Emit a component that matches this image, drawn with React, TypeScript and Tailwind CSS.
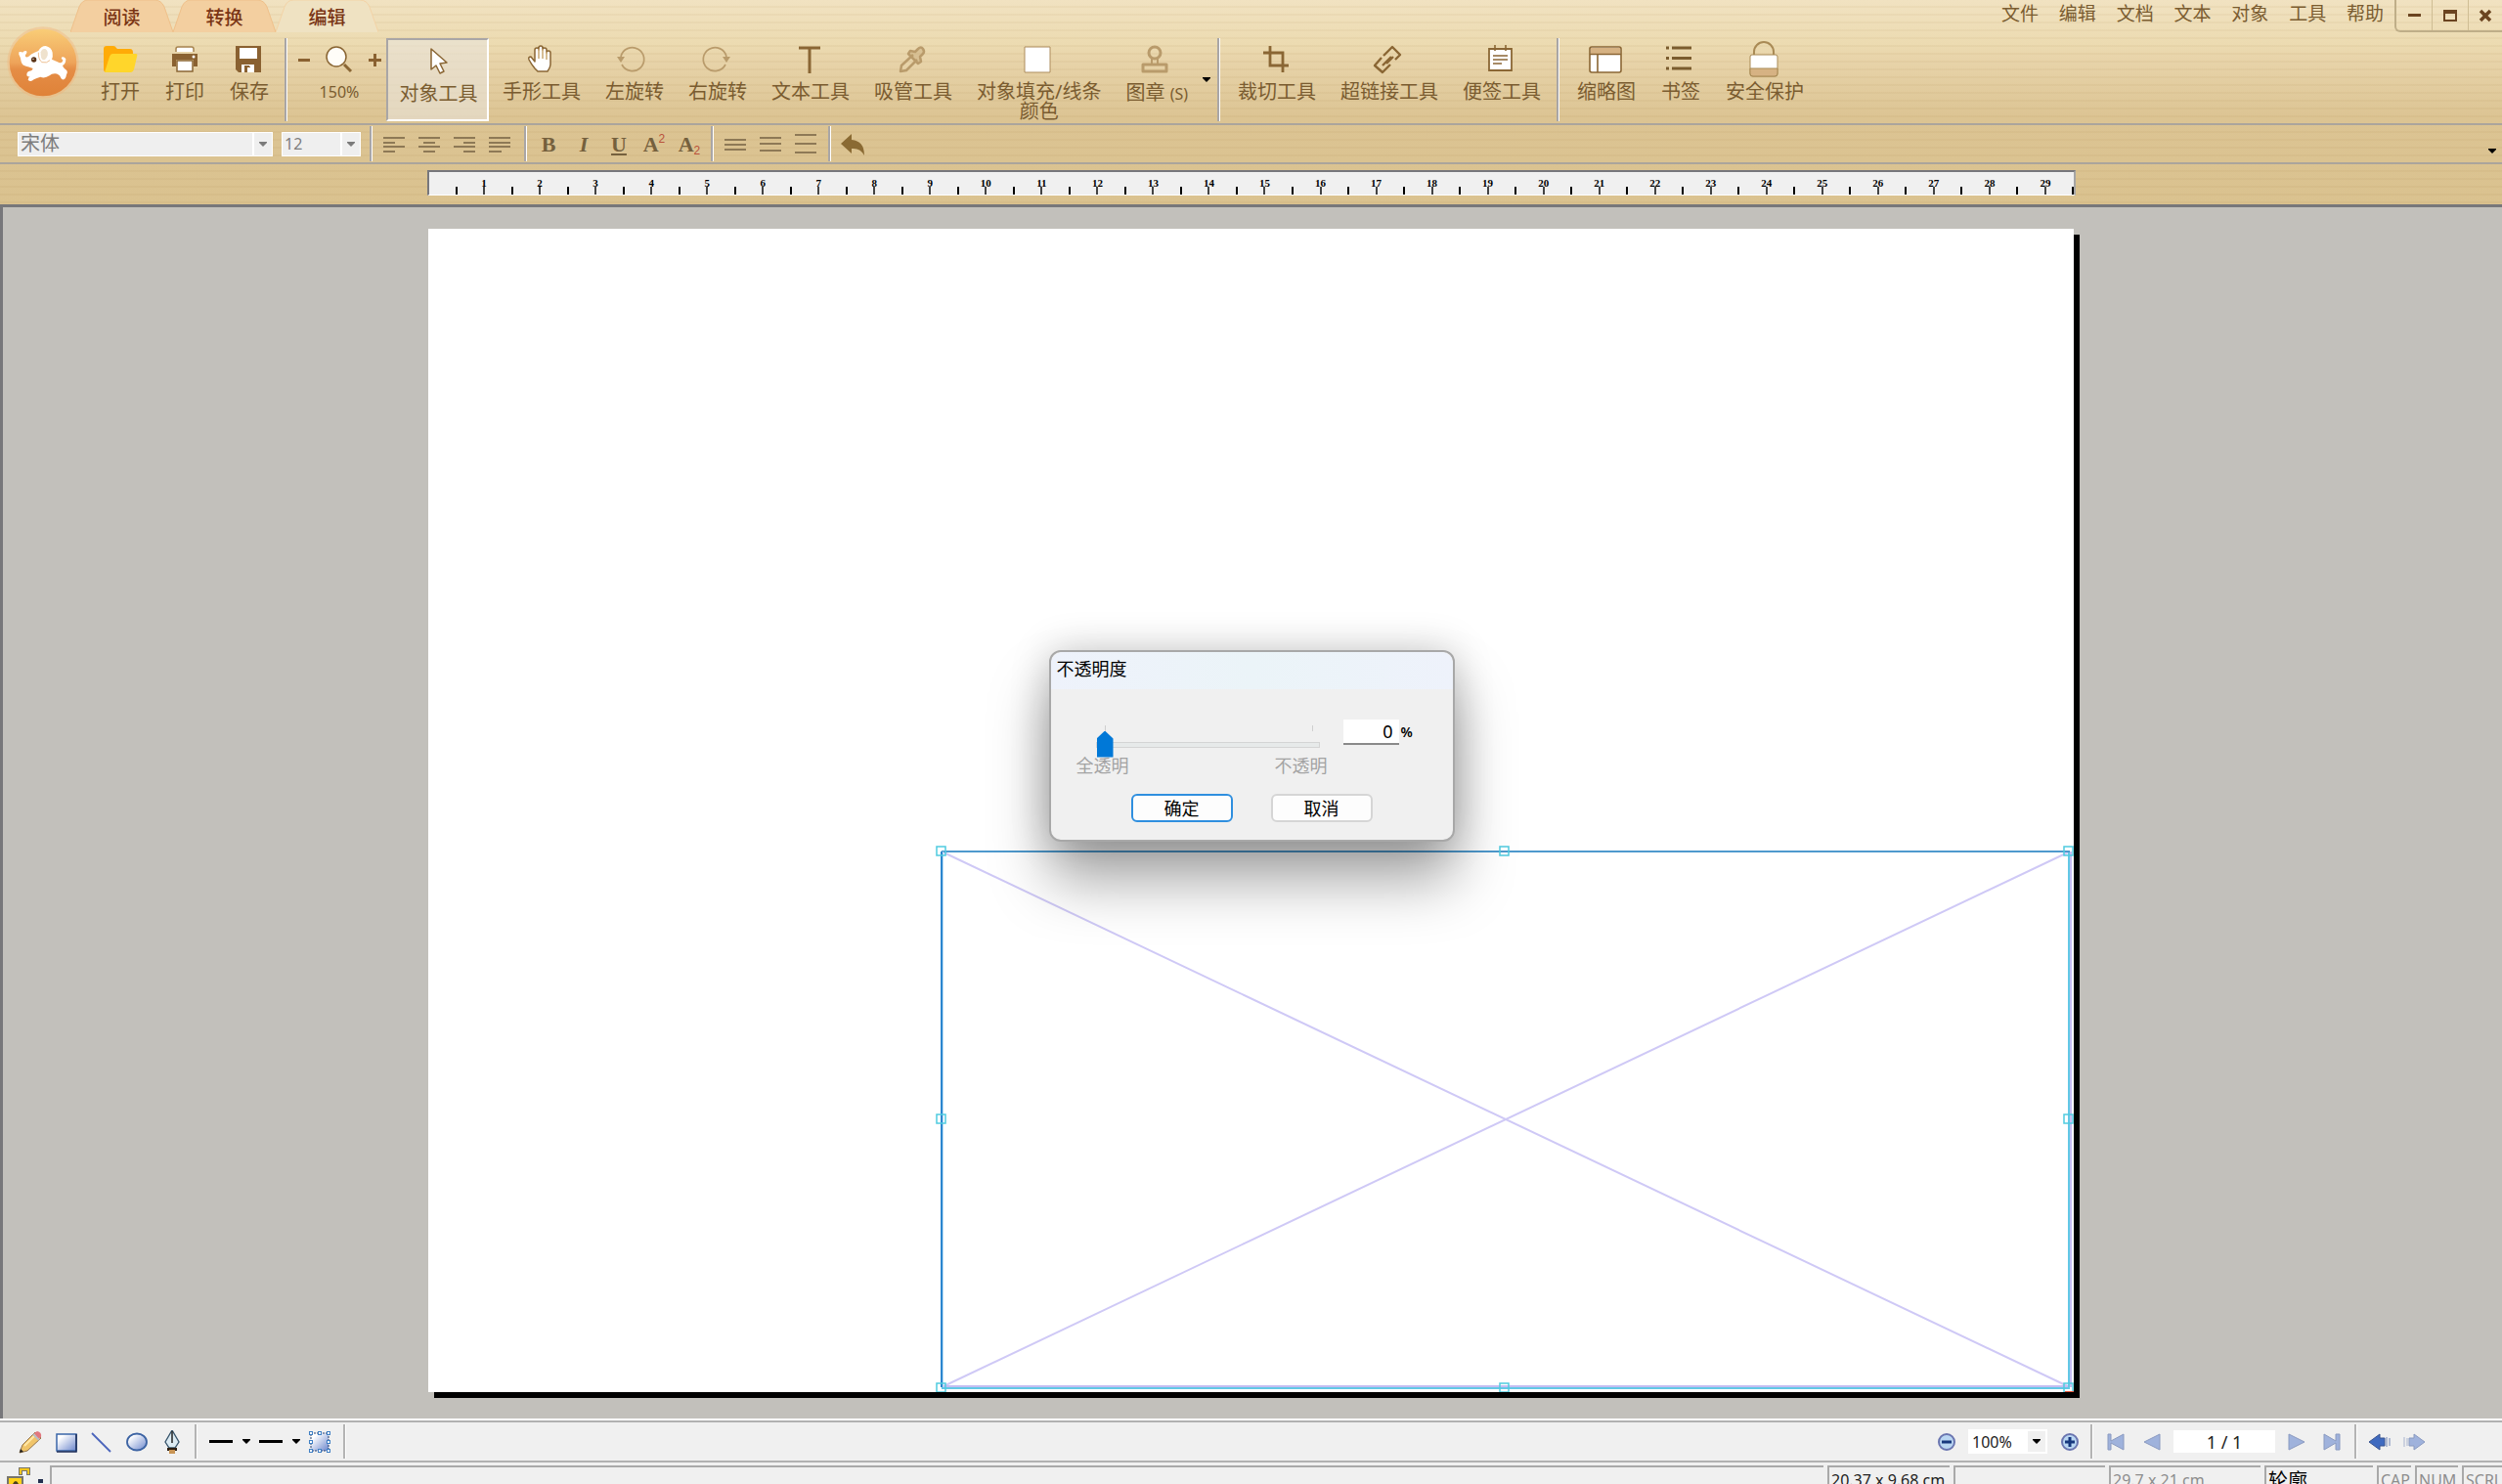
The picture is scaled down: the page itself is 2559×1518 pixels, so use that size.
import { useState } from "react";
import type { ReactNode } from "react";

const BROWN = "#8a6634";
const FADED = "#b99b6b";

function Sep({ light }: { light?: boolean }) {
  return <div className={`shrink-0 self-stretch w-[3px] border-l-2 border-r border-r-white ${light ? "border-l-[#b4b4b4]" : "border-l-[#a9a6a6]"}`} />;
}

function Arrow({ color = "#000" }: { color?: string }) {
  return (
    <svg width="8" height="5" viewBox="0 0 8 5" className="shrink-0"><path d="M0 0h8v1L4 5 0 1z" fill={color} /></svg>
  );
}

function Icon({ children, size = 32 }: { children: ReactNode; size?: number }) {
  return <svg width={size} height={size} viewBox={`0 0 ${size} ${size}`} fill="none" className="shrink-0">{children}</svg>;
}

const ICONS: Record<string, ReactNode> = {
  open: (
    <>
      <path d="M-1 5q0-3 3-3h7q2 0 3 2l1 1h13q3 0 3 4v3L25 29H2q-3 0-3-3z" fill="#ffab07" />
      <path d="M5 13q1-3 3-3h24q2 0 1 3l-3 13q-1 3-3 3H0z" fill="#ffd62b" />
    </>
  ),
  print: (
    <>
      <path d="M7 8V5q0-2 2-2h14q2 0 2 2v3" fill="#fff" stroke="#a68350" strokeWidth="1.5" />
      <path d="M3 10h26v13h-4v-7H7v7H3z" fill="#8a6131" />
      <path d="M8 17h16v11H8z" fill="#fff" stroke={BROWN} strokeWidth="1.5" />
      <circle cx="25" cy="13" r="1.5" fill="#fff" />
    </>
  ),
  save: (
    <>
      <path d="M2 2h26v27H5l-3-3z" fill="#8a6131" />
      <path d="M6 4h18v11H6zM8 21h13v8h-4v-6h-4v6H8z" fill="#fff" />
      <path d="M11 22h5v7h-5z" fill="#8a6131" /><path d="M14 24h3v5h-3z" fill="#fff" />
    </>
  ),
  zoom: (
    <>
      <path d="m21 21 7 7" stroke={BROWN} strokeWidth="3" />
      <circle cx="13" cy="13" r="10" fill="#fffdf8" stroke={BROWN} strokeWidth="1.5" />
    </>
  ),
  pointer: <path d="M8 3v21l5-4 4 8 4-2-4-8 7-1z" fill="#fff" stroke={BROWN} strokeWidth="1.5" strokeLinejoin="round" />,
  hand: (
    <>
      <path d="M9 25q-4-5-6-9-1-3 2-3l4 5V6q0-2 2-2t2 2V4q0-2 2-2t2 2v2q0-2 2-2t2 2v3q0-2 2-2t2 2v12q0 3-3 7H12z" fill="#fff" stroke={BROWN} strokeWidth="1.5" strokeLinejoin="round" />
      <path d="M13 5v10M17 5v10M21 8v8" stroke="#c9a873" strokeWidth="1.5" />
    </>
  ),
  left: (
    <>
      <path d="M2 13a12 12 0 1 1 1 8" stroke={FADED} strokeWidth="1.7" />
      <path d="M-2 13h8l-4 6z" fill={FADED} />
    </>
  ),
  right: (
    <>
      <path d="M25 13a12 12 0 1 0-1 8" stroke={FADED} strokeWidth="1.7" />
      <path d="M29 13h-8l4 6z" fill={FADED} />
    </>
  ),
  text: <path d="M4 4h22M15 4v26" stroke={BROWN} strokeWidth="3" />,
  dropper: (
    <>
      <path d="M16 11 4 22l-1 6 6-1 11-11" stroke={FADED} strokeWidth="2.5" strokeLinejoin="round" />
      <path d="m13 7 5 1 3-3q3-3 5 0t0 5l-3 3 1 5-3 2-10-10z" fill={FADED} fillOpacity="0.35" stroke={FADED} strokeWidth="2.5" strokeLinejoin="round" />
    </>
  ),
  fill: <path d="M1 3h26v26H1z" fill="#fff" stroke="#ad8c5d" />,
  stamp: (
    <>
      <circle cx="14" cy="9" r="6" stroke={FADED} strokeWidth="3" />
      <path d="M11 15v6m6-6v6" stroke={FADED} strokeWidth="2" />
      <path d="M2 21h24v7H2z" stroke={FADED} strokeWidth="3" strokeLinejoin="round" />
    </>
  ),
  crop: <path d="M9 2v20h19M2 9h20v20" stroke={BROWN} strokeWidth="2.8" />,
  link: <path d="m10 12 9-9 8 8-5 5M8 14l-7 8 8 7 8-8M9 22l9-9M13 20l7-7" stroke={BROWN} strokeWidth="2.4" strokeLinejoin="round" />,
  note: (
    <>
      <path d="M3 5h23v22H3z" fill="#fff" stroke={BROWN} strokeWidth="1.8" />
      <path d="M9 1v6M20 1v6M7 12h15M7 16h15M7 20h9" stroke={BROWN} strokeWidth="1.6" />
    </>
  ),
  thumbs: (
    <>
      <rect x="-1" y="3" width="32" height="26" rx="2" fill="#fff" stroke={BROWN} strokeWidth="1.6" />
      <path d="M0 4h30v6H0z" fill="#d6b283" /><path d="M-1 10.5h32M7 10v19" stroke={BROWN} strokeWidth="1.6" />
    </>
  ),
  list: <path d="M1 4h3M1 14.5h3M1 25h3M7 4h20M7 14.5h20M7 25h20" stroke="#7b5c2e" strokeWidth="3" />,
  lock: (
    <>
      <path d="M5 12V8a10 10 0 0 1 20 0v4" stroke="#a98a55" strokeWidth="2" />
      <rect x="1" y="11" width="28" height="22" rx="2" fill="#fff" stroke="#a98a55" />
      <path d="M1 25h28v5q0 3-3 3H4q-3 0-3-3z" fill="#d6b283" stroke="#a98a55" />
    </>
  ),
};

function Tool({ icon, label, active, disabled }: { icon: string; label: string; active?: boolean; disabled?: boolean }) {
  return (
    <button disabled={disabled} className={active
      ? "flex flex-col items-center w-[105px] pt-[6px] pl-[2px] border-t-2 border-l-2 border-r-2 border-b-2 border-t-[#a9a6a6] border-l-[#a9a6a6] border-r-white border-b-white bg-[#eae5dc]/60"
      : "flex flex-col items-center pt-[6px] whitespace-pre"}>
      <span className="h-8 w-8 [&>svg]:overflow-visible"><Icon>{ICONS[icon]}</Icon></span>
      <span className="mt-[7px] text-xl leading-5">{label}</span>
    </button>
  );
}

function Logo() {
  return (
    <svg width="80" height="80" viewBox="11 9 240 240" className="shrink-0">
      <defs>
        <linearGradient id="logo" x1="0" y1="0" x2="0" y2="1">
          <stop offset="0" stopColor="#f9cd77" /><stop offset="0.5" stopColor="#eea45a" />
          <stop offset="0.6" stopColor="#e58d46" /><stop offset="1" stopColor="#df8238" />
        </linearGradient>
      </defs>
      <circle cx="131" cy="129" r="110" fill="#f2b578" opacity="0.4" />
      <circle cx="131" cy="129" r="103" fill="url(#logo)" />
      <path d="M57 97q8-2 11 1 4-6 11-5 5 2 1 8-5 4-3 10 5 3 10-1 7-8 18-12l12-5q8-15 22-15 18 4 21 20 2 12-2 21 13 5 22 10 11 3 12-8-8-5-2-9 6-2 11 6 0 15-10 20 2 8 9 12 9 6 3 16-1 10-6 14-9 4-12-5-4-11-18-12-10 0-16 6-15 10-28 4-12 3-20 8-10 9-18 1 1-8 6-10-11 2-10-6 0-10 14-12 3-2 5-7-14-6-21-7-12-2-15-14-2-15-7-22z" fill="#fff" />
      <path d="M124 97q4-12 14-10 10 7 7 20-5 14-14 14-8-4-7-24z" fill="#efe2cd" />
      <path d="M117 98q-1 22 11 30 15 4 24-6" fill="none" stroke="#e9b27c" strokeWidth="2.5" />
      <circle cx="103" cy="120" r="8" fill="#5a3418" /><circle cx="101" cy="118" r="2" fill="#fff" />
    </svg>
  );
}

function Tab({ label, active }: { label: string; active?: boolean }) {
  return (
    <button className="relative h-[33px] w-[105px] text-[#7a3515]">
      <svg width="105" height="33" viewBox="0 0 105 33" className="absolute inset-0" fill="none">
        <path d="M0 33 9 7Q12 0 18 0h68q7 0 10 7l9 26z" fill={active ? "#efe2c2" : "#f3cfa0"} />
        <path d="M0 33 9 7Q12 0 18 0h68q7 0 10 7l9 26" stroke={active ? "#f3d3a6" : "#efc08a"} />
      </svg>
      <span className="relative text-[19px] leading-9 font-medium">{label}</span>
    </button>
  );
}

function Lines({ rows }: { rows: [number, number, number][] }) {
  return <Icon size={22}>{rows.map(([x, y, w]) => <path key={y} d={`M${x} ${y}h${w}`} stroke="#7b6748" strokeWidth="1.6" />)}</Icon>;
}

const ALIGN: [string, [number, number, number][]][] = [
  ["左对齐", [[0, 4, 22], [0, 9, 12], [0, 13, 22], [0, 18, 12]]],
  ["居中", [[0, 4, 22], [5, 9, 12], [0, 13, 22], [5, 18, 12]]],
  ["右对齐", [[0, 4, 22], [10, 9, 12], [0, 13, 22], [10, 18, 12]]],
  ["两端对齐", [[0, 4, 22], [0, 9, 22], [0, 13, 22], [0, 18, 13]]],
];
const SPACING: [string, [number, number, number][]][] = [
  ["单倍行距", [[0, 6, 22], [0, 11, 22], [0, 16, 22]]],
  ["1.5 倍行距", [[0, 4, 22], [0, 10, 22], [0, 17, 22]]],
  ["双倍行距", [[0, 1, 22], [0, 10, 22], [0, 19, 22]]],
];

function FakeSelect({ label, value, className }: { label: string; value: string; className: string }) {
  return (
    <div className={`flex h-[25px] border border-white bg-[#efefef] ${className}`}>
      <select aria-label={label} disabled className="min-w-0 flex-1 appearance-none px-[2px] leading-[22px] text-[#7d7d7d] opacity-100"><option>{value}</option></select>
      <span className="flex w-5 items-center justify-center border-l-2 border-white"><Arrow color="#7b7b7b" /></span>
    </div>
  );
}

function Ruler() {
  return (
    <div className="mx-auto flex h-[26px] w-[1686px] border-t-2 border-l-2 border-r-2 border-b border-t-[#77777c] border-l-[#77777c] border-r-[#a5a5a5] border-b-white bg-[#f0f0f0]">
      {[...Array(59)].map((_, i) => (
        <div key={i} className="relative flex flex-1 items-end justify-end">
          {i % 2 === 1 && (
            <span className="absolute -right-2 top-[5px] w-[18px] text-center font-['Liberation_Serif',serif] text-[11px] leading-3 font-bold text-black">{(i + 1) / 2}</span>
          )}
          <span className={`h-2 w-[2px] ${i % 2 ? "bg-[#444]" : "bg-black"}`} />
        </div>
      ))}
    </div>
  );
}

function Selection() {
  return (
    <svg viewBox="0 0 1683 1190" className="h-full w-full" fill="none">
      <path d="M525 637 1679 1185M525 1185 1679 637" stroke="#cfc9f6" strokeWidth="2" />
      <path d="M525 1184h1154M1680 637v548" stroke="#c3bdf2" strokeWidth="2" />
      <path d="M525 1186h1154M1678 637v548" stroke="#62c8e6" strokeWidth="2" />
      <path d="M525 637h1154" stroke="#4e99cd" strokeWidth="2" />
      <path d="M526.5 637v548" stroke="#b9dcf4" /><path d="M525 637v548" stroke="#2b86cf" strokeWidth="2" />
      {[[525, 637], [1101, 637], [1678, 637], [525, 911], [1678, 911], [525, 1186], [1101, 1186], [1678, 1186]].map(([x, y]) => (
        <rect key={`${x}-${y}`} x={x - 5} y={y - 5} width="9" height="9" stroke="#4fcbe0" strokeWidth="1.5" />
      ))}
      <path d="M1674 1190h9" stroke="#e0563c" strokeWidth="2" />
    </svg>
  );
}

function OpacityDialog() {
  const [value, setValue] = useState(0);
  return (
    <div className="pointer-events-none absolute inset-0 flex items-center justify-center pt-2 pl-px">
      <div role="dialog" aria-label="不透明度" className="pointer-events-auto w-[415px] rounded-xl border-2 border-[#a8a8a8] bg-[#f0f0f0] text-lg leading-6 text-black shadow-[0_40px_60px_rgba(0,0,0,0.35),0_0_40px_rgba(0,0,0,0.2)]">
        <div className="h-[38px] rounded-t-xl bg-linear-to-r from-[#eef2fb] via-[#ebf4f8] to-[#eef2fb] px-[6px] pt-[5px]">不透明度</div>
        <div className="flex gap-4 pt-[37px] pl-[26px]">
          <div className="w-[257px]">
            <div className="mr-[15px] ml-[29px] flex h-[6px] justify-between border-x border-[#cfcfcf]" />
            <input type="range" aria-label="不透明度" min={0} max={100} value={value} onChange={e => setValue(+e.target.value)}
              className="mx-[20px] block h-[27px] w-[229px] appearance-none bg-transparent [&::-webkit-slider-runnable-track]:h-[6px] [&::-webkit-slider-runnable-track]:border [&::-webkit-slider-runnable-track]:border-[#d4d4d4] [&::-webkit-slider-runnable-track]:bg-[#e7eaea] [&::-webkit-slider-thumb]:-mt-[12px] [&::-webkit-slider-thumb]:h-[27px] [&::-webkit-slider-thumb]:w-[17px] [&::-webkit-slider-thumb]:appearance-none [&::-webkit-slider-thumb]:bg-[#0078d7] [&::-webkit-slider-thumb]:[clip-path:polygon(50%_0,100%_30%,100%_100%,0_100%,0_30%)]" />
            <div className="-mt-[4px] flex justify-between text-[#a3a3a3]"><span>全透明</span><span>不透明</span></div>
          </div>
          <label className="flex items-center gap-[2px] self-start -mt-[6px]">
            <input value={value} onChange={e => setValue(Number(e.target.value) || 0)} className="h-[26px] w-[57px] border-b-2 border-[#8a8a8a] bg-white pr-[6px] text-right text-lg" />
            <span className="text-sm font-semibold">%</span>
          </label>
        </div>
        <div className="flex gap-[39px] pt-[17px] pb-[18px] pl-[82px]">
          <button className="h-[29px] w-[104px] rounded-md border-2 border-[#2f8fdf] bg-[#fdfdfd]">确定</button>
          <button className="h-[29px] w-[104px] rounded-md border-2 border-[#d5d5d5] bg-[#fdfdfd]">取消</button>
        </div>
      </div>
    </div>
  );
}

function ZoomGlyph({ plus }: { plus?: boolean }) {
  return (
    <Icon size={20}>
      <circle cx="10" cy="10" r="8" fill="#b9d6f2" stroke="#6a75b0" strokeWidth="2" />
      <path d={plus ? "M5 10h10M10 5v10" : "M5 10h10"} stroke="#17387e" strokeWidth="3" />
    </Icon>
  );
}

function DrawBar() {
  return (
    <div className="flex items-center py-[2px]">
      <svg width="0" height="0" className="absolute">
        <defs><linearGradient id="shape" x1="0" y1="0" x2="1" y2="1"><stop offset="0.2" stopColor="#fff" /><stop offset="1" stopColor="#6b86cc" /></linearGradient></defs>
      </svg>
      <div className="flex gap-3 pl-[19px] pr-3">
        <button aria-label="铅笔"><Icon size={24}>
          <path d="M1 23l3-8L17 2l6 6L9 21z" fill="#f0c469" stroke="#93734a" /><path d="M16 3l3-2q5 1 4 6l-3 2z" fill="#e2777f" />
          <path d="M1 23l1-4 3 3z" fill="#222" /><path d="M6 16 17 5" stroke="#ffe7a6" strokeWidth="2" /><path d="m15 4 6 6" stroke="#b8bcc6" strokeWidth="2" />
        </Icon></button>
        <button aria-label="矩形"><Icon size={24}><path d="M3 4h20v17H3z" fill="url(#shape)" stroke="#3a66a8" strokeWidth="1.5" /><path d="M23 4v18H3" stroke="#1d2c58" strokeWidth="1.5" /></Icon></button>
        <button aria-label="直线"><Icon size={24}><path d="m3 3 19 19" stroke="#4a64bb" strokeWidth="1.8" /></Icon></button>
        <button aria-label="椭圆"><Icon size={24}><ellipse cx="13" cy="12" rx="10" ry="8.5" fill="url(#shape)" stroke="#3c63a3" strokeWidth="1.8" /></Icon></button>
        <button aria-label="钢笔"><Icon size={24}>
          <path d="m13 0-7 12 4 6h6l4-6z" fill="#dcebf3" stroke="#37546b" strokeWidth="1.3" /><path d="M13 1v12" stroke="#222" strokeWidth="1.5" />
          <path d="M8 18h10v3H8z" fill="#2d1f12" /><path d="M10 20h6v4h-6z" fill="#c99555" />
        </Icon></button>
      </div>
      <Sep light />
      <div className="flex h-[35px] items-center gap-[9px] pr-[13px] pl-[12px]">
        <button aria-label="线型" className="flex items-center gap-[10px]"><span className="h-[3px] w-[24px] bg-black" /><Arrow /></button>
        <button aria-label="线宽" className="flex items-center gap-[10px]"><span className="h-[3px] w-[24px] bg-black" /><Arrow /></button>
        <button aria-label="变换"><Icon size={22}>
          <path d="M2 2h18v18H2z" fill="url(#shape)" stroke="#27416f" strokeDasharray="2 1" />
          {[[0, 0], [9, 0], [18, 0], [0, 9], [18, 9], [0, 18], [9, 18], [18, 18]].map(([x, y]) => <rect key={`${x}-${y}`} x={x + 0.5} y={y + 0.5} width="3" height="3" fill="#fff" stroke="#3f7fc4" />)}
        </Icon></button>
      </div>
      <Sep light />
      <div className="ml-auto flex h-[35px] items-center pr-[79px]">
        <button aria-label="缩小"><ZoomGlyph /></button>
        <div className="mr-[13px] ml-3 flex h-[25px] w-[81px] bg-white p-[2px]">
          <select aria-label="缩放" className="min-w-0 flex-1 appearance-none pl-[2px] text-base leading-5 text-[#222]"><option>100%</option></select>
          <span className="flex w-[18px] items-center justify-center bg-[#f0f0f0]"><Arrow /></span>
        </div>
        <button aria-label="放大"><ZoomGlyph plus /></button>
        <div className="mr-[14px] ml-[11px] flex self-stretch"><Sep light /></div>
        <div className="flex items-center">
          <button aria-label="首页"><Icon size={20}><path d="M1 2h3v7l13-7v16L4 11v7H1z" fill="#9fb2dc" stroke="#8a9ac0" /></Icon></button>
          <button aria-label="上一页" className="ml-4"><Icon size={20}><path d="M18 2v16L2 10z" fill="#9fb2dc" stroke="#8a9ac0" /></Icon></button>
          <input aria-label="页码" defaultValue="1 / 1" className="mx-3 h-[23px] w-[104px] bg-white text-center text-lg leading-5 text-[#222]" />
          <button aria-label="下一页"><Icon size={20}><path d="M2 2v16l16-8z" fill="#9fb2dc" stroke="#8a9ac0" /></Icon></button>
          <button aria-label="末页" className="ml-4"><Icon size={20}><path d="M2 2v16l12-7v7h4V2h-4v7z" fill="#9fb2dc" stroke="#8a9ac0" /></Icon></button>
        </div>
        <div className="mr-3 ml-[13px] flex self-stretch"><Sep light /></div>
        <button aria-label="后退"><Icon size={22}><path d="M0 11 11 3v4h5v8h-5v4z" fill="#3f6ac0" stroke="#3a5590" /><path d="M18 6v10M21 7v8" stroke="#6f83b4" /></Icon></button>
        <button aria-label="前进" className="ml-[13px]"><Icon size={22}><path d="M22 11 11 3v4H6v8h5v4z" fill="#9fb2dc" stroke="#8a9ac0" /><path d="M1 6v10M4 7v8" stroke="#a9b4cf" /></Icon></button>
      </div>
    </div>
  );
}

const PANES = [
  { text: "20.37 x 9.68 cm", box: "w-[125px] text-[#222]" },
  { text: "", box: "w-[155px]" },
  { text: "29.7 x 21 cm", box: "w-[155px] text-[#8d8d8d]" },
  { text: "轮廓", box: "w-[111px] text-black text-xl" },
  { text: "CAP", box: "w-[35px] text-[#8d8d8d]" },
  { text: "NUM", box: "w-[44px] text-[#8d8d8d]" },
  { text: "SCRL", box: "w-[41px] text-[#8d8d8d]" },
];

export default function App() {
  return (
    <div className="relative flex h-screen flex-col overflow-hidden bg-[#f0f0f0] font-['Noto_Sans','Noto_Sans_CJK_SC',sans-serif] text-[#7a5c30]">
      <header className="bg-[repeating-linear-gradient(to_bottom,transparent_0_6px,rgba(150,110,50,0.06)_6px_8px),linear-gradient(to_bottom,#f1e2c1_0,#ecdbb1_45px,#e8d4aa_60px,#dcc493_120px,#dac28f_209px)]">
        <div className="flex h-[33px] justify-between">
          <div className="flex pl-[72px]"><Tab label="阅读" /><Tab label="转换" /><Tab label="编辑" active /></div>
          <div className="flex">
            <nav className="mr-[11px] flex w-[391px] justify-between text-[19px] leading-7">
              {["文件", "编辑", "文档", "文本", "对象", "工具", "帮助"].map(m => <button key={m} className="self-start">{m}</button>)}
            </nav>
            <div className="flex w-[110px] divide-x divide-[#cfbd93] rounded-bl-md border-b-2 border-l-2 border-[#bfae88]">
              <button aria-label="最小化" className="flex w-[37px] items-center justify-center"><span className="h-[3px] w-[13px] bg-[#6b4420]" /></button>
              <button aria-label="最大化" className="flex w-[37px] items-center justify-center"><span className="h-3 w-[14px] border-2 border-t-4 border-[#6b4420]" /></button>
              <button aria-label="关闭" className="flex flex-1 items-center justify-center"><Icon size={14}><path d="m2 2 10 10M12 2 2 12" stroke="#6b4420" strokeWidth="3.5" /></Icon></button>
            </div>
          </div>
        </div>

        <div className="flex h-[95px] border-b-2 border-[#aba59c] pt-[6px] pb-[2px]">
          <button aria-label="主菜单" className="-mt-[15px] ml-1 self-start"><Logo /></button>
          <div className="flex gap-[26px] pr-4 pl-[19px]">
            <Tool icon="open" label="打开" /><Tool icon="print" label="打印" /><Tool icon="save" label="保存" />
          </div>
          <Sep />
          <div className="flex pl-[11px]">
            <button aria-label="缩小" className="mt-[21px] h-[3px] w-[12px] bg-[#8a6131]" />
            <div className="flex w-[60px] flex-col items-center pt-[6px]">
              <Icon>{ICONS.zoom}</Icon>
              <span className="mt-[7px] text-base leading-5">150%</span>
            </div>
            <button aria-label="放大" className="mt-4 mr-[5px] self-start"><Icon size={13}><path d="M0 6.5h13M6.5 0v13" stroke="#8a6131" strokeWidth="3" /></Icon></button>
          </div>
          <Tool icon="pointer" label="对象工具" active />
          <div className="flex gap-[25px] pr-[7px] pl-[14px]">
            <Tool icon="hand" label="手形工具" /><Tool icon="left" label="左旋转" disabled /><Tool icon="right" label="右旋转" disabled />
            <Tool icon="text" label="文本工具" /><Tool icon="dropper" label="吸管工具" disabled />
            <Tool icon="fill" label={"对象填充/线条\n颜色"} />
            <div className="flex">
              <button className="flex flex-col items-center pt-[6px]">
                <Icon>{ICONS.stamp}</Icon>
                <span className="mt-[7px] text-xl leading-5">图章 <span className="text-base">(S)</span></span>
              </button>
              <button aria-label="更多" className="ml-[15px] flex items-center"><Arrow /></button>
            </div>
          </div>
          <Sep />
          <div className="flex gap-[25px] pr-4 pl-[18px]">
            <Tool icon="crop" label="裁切工具" /><Tool icon="link" label="超链接工具" /><Tool icon="note" label="便签工具" />
          </div>
          <Sep />
          <div className="flex gap-[26px] pl-[18px]">
            <Tool icon="thumbs" label="缩略图" /><Tool icon="list" label="书签" /><Tool icon="lock" label="安全保护" />
          </div>
        </div>

        <div className="flex h-[40px] items-center border-b-2 border-[#aba59c] py-[1px] pl-[18px] text-[#75603d]">
          <FakeSelect label="字体" value="宋体" className="w-[261px] text-xl" />
          <FakeSelect label="字号" value="12" className="mr-[9px] ml-[9px] w-[81px] text-base" />
          <Sep />
          <div className="flex gap-[14px] pt-[2px] pr-[14px] pl-[11px]">
            {ALIGN.map(([n, rows]) => <button key={n} aria-label={n}><Lines rows={rows} /></button>)}
          </div>
          <Sep />
          <div className="flex pt-[2px] pr-1 pl-1 font-['Liberation_Serif',serif] text-[22px] leading-6 font-bold">
            <button className="w-9">B</button>
            <button className="w-9 italic">I</button>
            <button className="w-9 underline underline-offset-2">U</button>
            <button className="flex w-9 justify-center">A<span className="font-['Liberation_Sans',sans-serif] text-xs leading-3 font-normal text-[#b9513a]">2</span></button>
            <button className="flex w-9 items-end justify-center">A<span className="font-['Liberation_Sans',sans-serif] text-xs leading-3 font-normal text-[#b9513a]">2</span></button>
          </div>
          <Sep />
          <div className="flex gap-[14px] pt-[2px] pr-3 pl-[11px]">
            {SPACING.map(([n, rows]) => <button key={n} aria-label={n}><Lines rows={rows} /></button>)}
          </div>
          <Sep />
          <button aria-label="撤销" className="ml-[10px] pt-[2px]"><Icon size={24}><path d="M0 11 11 1v6q13 1 13 16-4-8-13-7v5z" fill="#8a6a33" /></Icon></button>
          <button aria-label="更多" className="mr-[6px] ml-auto self-end pb-2"><Arrow /></button>
        </div>

        <div className="h-[41px] pt-[6px] pl-px"><Ruler /></div>
      </header>

      <main className="min-h-0 flex-1 overflow-hidden border-t-3 border-l-3 border-[#77777a] bg-[#c2c0bb] pt-[22px] pr-[3px]">
        <div className="mx-auto h-[1190px] w-[1683px] bg-white shadow-[6px_6px_0_#000]"><Selection /></div>
      </main>

      <footer className="border-t-2 border-white">
        <div className="border-t-2 border-b-2 border-[#b1b1b1]"><DrawBar /></div>
        <div className="flex h-[22px] gap-1 overflow-hidden pt-[3px] text-base leading-[26px] whitespace-nowrap">
          <button aria-label="安全" className="flex w-[47px] items-start gap-2 pl-[7px] pt-[2px]">
            <svg width="24" height="24" viewBox="0 0 24 24" fill="none" className="shrink-0">
              <path d="M14 8V2h8v6" stroke="#77756c" strokeWidth="4" /><path d="M14 7V2h8v5" stroke="#f5c61c" strokeWidth="2" />
              <path d="M1 10h15v13H1z" fill="#ffd21a" stroke="#77756c" strokeWidth="2" /><path d="M6 17q3-6 6 0v3H6z" fill="#4a4020" />
            </svg>
            <span className="mt-3 h-1 w-[5px] bg-[#243050]" />
          </button>
          <div className="flex-1 border-t-2 border-l-2 border-[#a9a9a9]" />
          {PANES.map(p => <div key={p.text} className={`shrink-0 overflow-hidden border-t-2 border-l-2 border-[#a9a9a9] pl-[2px] ${p.box}`}>{p.text}</div>)}
        </div>
      </footer>
      <OpacityDialog />
    </div>
  );
}
